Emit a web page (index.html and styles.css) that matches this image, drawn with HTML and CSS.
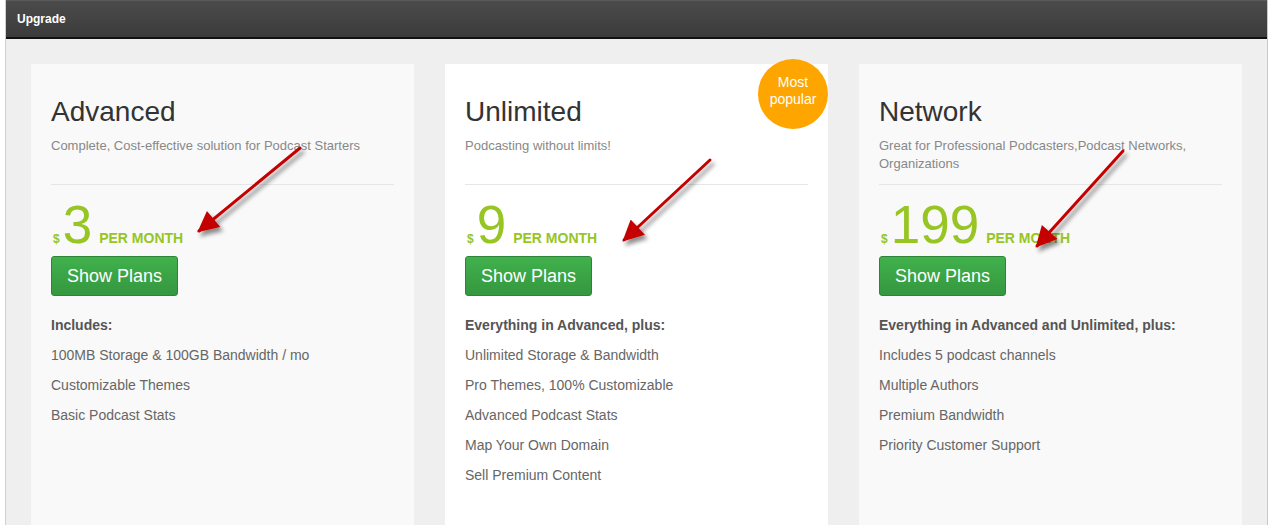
FILE: index.html
```html
<!DOCTYPE html>
<html lang="en">
<head>
<meta charset="utf-8">
<title>Upgrade</title>
<link rel="stylesheet" href="styles.css">
</head>
<body>
<div class="window">
  <header class="titlebar">Upgrade</header>
  <main class="plans">
    <section class="plan">
      <div class="plan-head">
        <h2 class="plan-name">Advanced</h2>
        <p class="plan-desc">Complete, Cost-effective solution for Podcast Starters</p>
      </div>
      <div class="price">
        <span class="currency">$</span><span class="amount">3</span><span class="period">PER MONTH</span>
      </div>
      <button class="btn-plans" type="button">Show Plans</button>
      <ul class="features">
        <li class="features-title">Includes:</li>
        <li>100MB Storage &amp; 100GB Bandwidth / mo</li>
        <li>Customizable Themes</li>
        <li>Basic Podcast Stats</li>
      </ul>
    </section>

    <section class="plan plan-featured">
      <div class="badge">Most<br>popular</div>
      <div class="plan-head">
        <h2 class="plan-name">Unlimited</h2>
        <p class="plan-desc">Podcasting without limits!</p>
      </div>
      <div class="price">
        <span class="currency">$</span><span class="amount">9</span><span class="period">PER MONTH</span>
      </div>
      <button class="btn-plans" type="button">Show Plans</button>
      <ul class="features">
        <li class="features-title">Everything in Advanced, plus:</li>
        <li>Unlimited Storage &amp; Bandwidth</li>
        <li>Pro Themes, 100% Customizable</li>
        <li>Advanced Podcast Stats</li>
        <li>Map Your Own Domain</li>
        <li>Sell Premium Content</li>
      </ul>
    </section>

    <section class="plan">
      <div class="plan-head">
        <h2 class="plan-name">Network</h2>
        <p class="plan-desc">Great for Professional Podcasters,Podcast Networks, Organizations</p>
      </div>
      <div class="price">
        <span class="currency">$</span><span class="amount">199</span><span class="period">PER MONTH</span>
      </div>
      <button class="btn-plans" type="button">Show Plans</button>
      <ul class="features">
        <li class="features-title">Everything in Advanced and Unlimited, plus:</li>
        <li>Includes 5 podcast channels</li>
        <li>Multiple Authors</li>
        <li>Premium Bandwidth</li>
        <li>Priority Customer Support</li>
      </ul>
    </section>
  </main>
</div>

<!-- red callout arrows pointing at each price -->
<svg class="callouts" width="1270" height="525" viewBox="0 0 1270 525" aria-hidden="true">
  <defs>
    <marker id="head" viewBox="0 0 10 10" refX="9" refY="5" markerWidth="8" markerHeight="7" markerUnits="strokeWidth" orient="auto">
      <path d="M0 0 L10 5 L0 10 Z" fill="#c40000"/>
    </marker>
    <filter id="shade" x="-20%" y="-20%" width="150%" height="150%">
      <feDropShadow dx="3" dy="4" stdDeviation="2" flood-color="#000" flood-opacity="0.45"/>
    </filter>
  </defs>
  <g filter="url(#shade)" stroke="#c40000" stroke-width="3" fill="none" stroke-linecap="round">
    <line x1="300" y1="148" x2="199" y2="231" marker-end="url(#head)"/>
    <line x1="710" y1="160" x2="624" y2="240" marker-end="url(#head)"/>
    <line x1="1123" y1="151" x2="1037" y2="246" marker-end="url(#head)"/>
  </g>
</svg>
</body>
</html>
```

FILE: styles.css
```css
* {
  box-sizing: border-box;
}

html,
body {
  margin: 0;
  padding: 0;
  background: #ffffff;
  font-family: "Liberation Sans", Arial, sans-serif;
  overflow: hidden;
}

.window {
  margin-left: 5px;
  width: 1263px;
  height: 525px;
  background: #efefef;
  border-right: 1px solid #c8c8c8;
  border-left: 1px solid #d0d0d0;
  overflow: hidden;
}

.titlebar {
  height: 39px;
  margin-left: -1px;
  padding-left: 11px;
  display: flex;
  align-items: center;
  color: #ffffff;
  font-size: 12px;
  font-weight: bold;
  background: linear-gradient(#4b4b4b, #3b3b3b);
  border-top: 1px solid #5a5a5a;
  border-left: 1px solid #222;
  border-bottom: 2px solid #111;
}

.plans {
  display: grid;
  grid-template-columns: repeat(3, 383px);
  column-gap: 31px;
  padding: 25px 25px 0 25px;
}

.plan {
  position: relative;
  min-height: 480px;
  padding: 32px 20px 0 20px;
  background: #f9f9f9;
}

.plan-featured {
  background: #ffffff;
}

.badge {
  position: absolute;
  top: -5px;
  right: 0;
  width: 70px;
  height: 70px;
  border-radius: 50%;
  background: #ffa500;
  color: #ffffff;
  font-size: 14px;
  line-height: 17px;
  text-align: center;
  padding-top: 15px;
}

.plan-head {
  padding-bottom: 11px;
  border-bottom: 1px solid #e6e6e6;
}

.plan-name {
  margin: 0;
  font-size: 28px;
  font-weight: normal;
  line-height: 31px;
  color: #333333;
}

.plan-desc {
  margin: 10px 0 0 0;
  min-height: 36px;
  font-size: 13px;
  line-height: 18px;
  color: #888888;
}

.price {
  display: flex;
  align-items: baseline;
  margin-top: 14px;
  height: 52px;
  color: #97c523;
  font-weight: bold;
}

.currency {
  font-size: 12px;
  margin-left: 2px;
  margin-right: 3px;
}

.amount {
  font-size: 53px;
  font-weight: normal;
  line-height: 52px;
  margin-right: 7px;
}

.period {
  font-size: 14px;
}

.btn-plans {
  display: block;
  margin-top: 5px;
  width: 127px;
  height: 40px;
  padding: 0;
  font-family: "Liberation Sans", Arial, sans-serif;
  font-size: 18px;
  color: #ffffff;
  background: linear-gradient(#40b14c, #35973f);
  border: 1px solid #2e8436;
  border-radius: 3px;
  cursor: pointer;
}

.features {
  list-style: none;
  margin: 14px 0 0 0;
  padding: 0;
  font-size: 14px;
  line-height: 30px;
  color: #666666;
}

.features-title {
  font-weight: bold;
  color: #555555;
}

.callouts {
  position: absolute;
  top: 0;
  left: 0;
  pointer-events: none;
}
```
